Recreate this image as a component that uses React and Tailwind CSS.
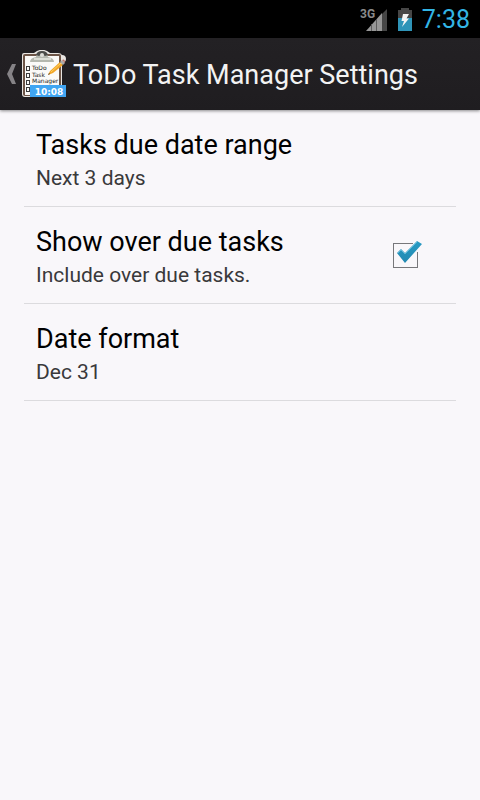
import React, { useState } from "react";

function SignalIcon() {
  return (
    <svg className="h-6 w-7" viewBox="0 0 28 24" role="img" aria-label="3G signal">
      <text x="0" y="11" fill="#8a8a8a" fontSize="12" fontWeight="700" fontFamily="Roboto, sans-serif">3G</text>
      <path d="M27 2V24H22V7Z" fill="#464646" />
      <path d="M6 24L22 6V24Z" fill="#969696" />
      <path d="M11.5 17V24M16.5 12V24" stroke="#5c5c5c" strokeWidth="1" />
    </svg>
  );
}

function BatteryIcon() {
  return (
    <svg className="h-6 w-4" viewBox="0 0 16 24" role="img" aria-label="Battery charging">
      <path d="M4 1H12V3H15V11H1V3H4Z" fill="#474747" />
      <path d="M1 11H15V24H1Z" fill="#2f94b8" />
      <path d="M6 7H12L9.5 11.5H12L5 20L7 14H4.500Z" fill="#f4f4f4" />
    </svg>
  );
}

function ClipboardIcon() {
  return (
    <svg className="h-12 w-12" viewBox="0 0 48 48" aria-hidden="true">
      <path d="M3 3H13L16 1Q21 -1.500 26 1L29 3H37Q40 3 41 5Q45 5 45 9Q45 12 41 14V44Q41 47 38 47H4Q1 47 1 44V5Q1 3 3 3Z" fill="#e9e6e2" />
      <rect x="2" y="4" width="38" height="42" rx="2" fill="#6d5547" />
      <rect x="4" y="6" width="34" height="39" fill="#fbfaf8" />
      <path d="M9 12Q9 8 15 7Q16 1 21 1Q26 1 27 7Q33 8 33 12Z" fill="#b5b8af" />
      <path d="M15 5Q16 1 21 1Q26 1 27 5L24 6Q21 3 18 6Z" fill="#4b4b48" />
      <circle cx="21" cy="5" r="2" fill="#deded9" />
      <path d="M13 9H30" stroke="#dcded6" strokeWidth="2" />
      <g fill="none" stroke="#3c3c3c" strokeWidth="1">
        <rect x="5.500" y="16.500" width="3" height="4" />
        <rect x="5.500" y="23.500" width="3" height="4" />
        <rect x="5.500" y="30.500" width="3" height="4" />
        <rect x="5.500" y="37.500" width="3" height="4" />
      </g>
      <g fill="#222" fontSize="6" fontWeight="500" fontFamily="'DejaVu Sans', sans-serif">
        <text x="11" y="20">ToDo</text>
        <text x="11" y="27">Task</text>
        <text x="11" y="33">Manager</text>
      </g>
      <path d="M27 25L29 21L39 12L42 15L32 23Z" fill="#f2a629" />
      <path d="M30 22L40 13" stroke="#ffd25d" strokeWidth="1" />
      <path d="M39 12L41 10L44 13L42 15Z" fill="#aaa" />
      <path d="M41 10Q44 8 44 13Z" fill="#bf7465" />
      <path d="M27 25L28 23L29 24Z" fill="#4e3b28" />
      <rect x="9" y="35" width="36" height="12" fill="#40a5f2" />
      <text x="28" y="45" textAnchor="middle" fill="#fff" fontSize="9" fontWeight="700" fontFamily="'DejaVu Sans', sans-serif">10:08</text>
    </svg>
  );
}

function PreferenceText({ title, summary }) {
  return (
    <span className="flex min-w-0 flex-col pt-[3px]">
      <span className="text-[27px] leading-8 text-black">{title}</span>
      <span className="pt-[5px] text-[21px] leading-6 text-[#39393b]">{summary}</span>
    </span>
  );
}

function Preference({ title, summary }) {
  return (
    <li className="border-b border-[#dcdbde]">
      <button type="button" className="flex h-24 w-full items-center px-3 text-left">
        <PreferenceText title={title} summary={summary} />
      </button>
    </li>
  );
}

function CheckPreference({ title, summary }) {
  const [checked, setChecked] = useState(true);
  return (
    <li className="border-b border-[#dcdbde]">
      <label className="flex h-24 items-center justify-between pl-3 pr-[31px]">
        <PreferenceText title={title} summary={summary} />
        <span className="relative flex h-8 w-8 shrink-0 items-center">
          <input
            type="checkbox"
            checked={checked}
            onChange={(e) => setChecked(e.target.checked)}
            className="h-[25px] w-[25px] appearance-none border border-[#77777a] bg-[#f9f7fa]"
          />
          {checked && (
            <svg className="pointer-events-none absolute inset-0 h-8 w-8" viewBox="0 0 32 32" aria-hidden="true">
              <defs>
                <linearGradient id="tick" x1="0" y1="0" x2="0" y2="1">
                  <stop offset="0" stopColor="#299bc4" />
                  <stop offset="1" stopColor="#2389b1" />
                </linearGradient>
              </defs>
              <path d="M20 3H26V13H20Z" fill="#f9f7fa" />
              <path d="M4 14L8 10L12 14L24 2L29 5L12 24Z" fill="url(#tick)" />
              <path d="M5 14L8 11L12 15L24 3" fill="none" stroke="#5fbad9" strokeWidth="1" />
            </svg>
          )}
        </span>
      </label>
    </li>
  );
}

export default function App() {
  return (
    <div className="min-h-screen bg-[#f9f7fa] font-[Roboto,sans-serif]">
      <div className="flex h-[38px] items-center justify-end bg-black pr-[10px]">
        <div className="flex items-center gap-[9px] pb-px">
          <SignalIcon />
          <BatteryIcon />
        </div>
        <time className="pl-[9px] pt-[2px] text-[25px] leading-8 text-[#33b5e5]">7:38</time>
      </div>
      <header className="flex h-[72px] items-center bg-linear-to-b from-[#232124] to-[#1f1d20] shadow-[0_1px_3px_rgba(0,0,0,0.45)]">
        <button type="button" aria-label="Navigate up" className="flex items-center pl-[6px]">
          <svg className="h-6 w-[15px]" viewBox="0 0 15 24" aria-hidden="true">
            <path d="M6 2H10L6 12L10 22H6L1 12Z" fill="#858386" />
          </svg>
          <ClipboardIcon />
        </button>
        <h1 className="pl-1 pt-[2px] text-[27px] leading-8 text-[#f3f3f3]">ToDo Task Manager Settings</h1>
      </header>
      <ul className="px-6">
        <Preference title="Tasks due date range" summary="Next 3 days" />
        <CheckPreference title="Show over due tasks" summary="Include over due tasks." />
        <Preference title="Date format" summary="Dec 31" />
      </ul>
    </div>
  );
}
